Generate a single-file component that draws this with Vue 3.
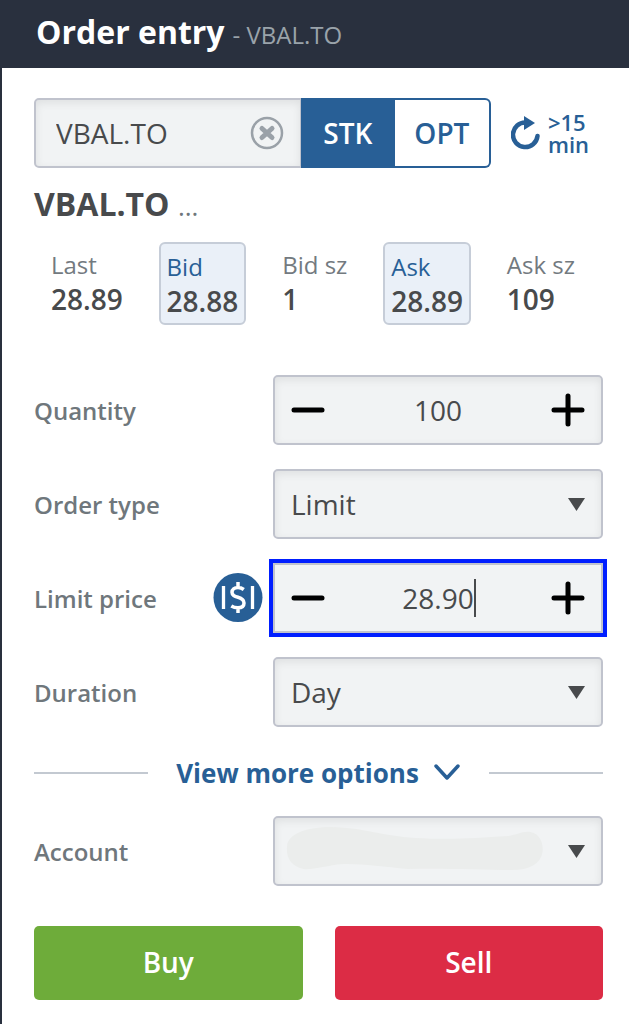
<template>
  <div class="order-entry">
    <header class="header">
      <h1>Order entry</h1>
      <span class="header-symbol">- {{ symbol }}</span>
    </header>

    <form class="form" @submit.prevent>
      <div class="symbol-row">
        <div class="symbol-box">
          <input v-model.trim="symbol" class="symbol-input" type="text" aria-label="Symbol">
          <button type="button" class="icon-btn" aria-label="Clear symbol" @click="symbol = ''">
            <svg width="34" height="34" viewBox="0 0 34 34" fill="none" stroke="#9aa1a8">
              <circle cx="17" cy="17" r="15" stroke-width="2.500" />
              <path d="M12 12.500L22 21.500M22 12.500L12 21.500" stroke-width="5" stroke-linecap="round" />
            </svg>
          </button>
        </div>
        <button
          v-for="kind in kinds"
          :key="kind"
          type="button"
          class="kind"
          :class="{ active: kind === selectedKind }"
          @click="selectedKind = kind"
        >
          {{ kind }}
        </button>
        <button type="button" class="refresh">
          <svg width="30" height="36" viewBox="0 0 30 36">
            <path d="M15 7.500A12.300 12.300 0 1 0 26.500 21" fill="none" stroke="#285f96" stroke-width="4.500" stroke-linecap="round" />
            <path d="M13 1L24 8L13 15z" fill="#285f96" />
          </svg>
          <span>&gt;15<br>min</span>
        </button>
      </div>

      <h2>{{ symbol }} <span class="more">...</span></h2>

      <div class="quotes">
        <component
          :is="quote.price ? 'button' : 'div'"
          v-for="quote in quotes"
          :key="quote.label"
          class="quote"
          :class="{ 'quote-btn': quote.price }"
          :type="quote.price ? 'button' : null"
          @click="quote.price && (price = quote.value)"
        >
          <span class="quote-label">{{ quote.label }}</span>
          <span class="quote-value">{{ quote.value }}</span>
        </component>
      </div>

      <div class="fields">
        <div class="field">
          <label for="quantity">Quantity</label>
          <div class="control">
            <button type="button" class="icon-btn" aria-label="Decrease quantity" @click="quantity--">
              <svg class="step" viewBox="0 0 34 34"><path d="M3 17H31" /></svg>
            </button>
            <input id="quantity" v-model="quantity" type="text">
            <button type="button" class="icon-btn" aria-label="Increase quantity" @click="quantity++">
              <svg class="step" viewBox="0 0 34 34"><path d="M3 17H31M17 3V31" /></svg>
            </button>
          </div>
        </div>

        <div class="field">
          <label for="order-type">Order type</label>
          <div class="control">
            <select id="order-type" v-model="orderType">
              <option>Limit</option>
              <option>Market</option>
            </select>
            <svg class="arrow" viewBox="0 0 17 13"><path d="M0 0H17L8.500 13z" /></svg>
          </div>
        </div>

        <div class="field">
          <label for="price">Limit price</label>
          <button type="button" class="icon-btn price-btn" aria-label="Price helper">
            <svg width="50" height="50" viewBox="0 0 50 50" fill="none" stroke="#fff" stroke-linejoin="round">
              <circle cx="25" cy="24.500" r="24.500" fill="#285f96" stroke="none" />
              <path d="M10.500 13V36M39.500 13V36" stroke-width="3.300" />
              <path d="M30.800 16.500C29 15.200 27 14.500 25 14.500C21.300 14.500 19 16.500 19 19.200C19 22.500 21.500 23.300 25 24.300C28.500 25.300 31 26.800 31 30C31 33 28.700 34.800 25 34.800C22.500 34.800 20.200 34.200 18.300 33M25 9V14.500M25 34.500V40" stroke-width="3.500" />
            </svg>
          </button>
          <div class="control focused">
            <button type="button" class="icon-btn" aria-label="Decrease price" @click="stepPrice(-0.01)">
              <svg class="step" viewBox="0 0 34 34"><path d="M3 17H31" /></svg>
            </button>
            <input id="price" v-model="price" type="text">
            <span class="caret"></span>
            <button type="button" class="icon-btn" aria-label="Increase price" @click="stepPrice(0.01)">
              <svg class="step" viewBox="0 0 34 34"><path d="M3 17H31M17 3V31" /></svg>
            </button>
          </div>
        </div>

        <div class="field">
          <label for="duration">Duration</label>
          <div class="control">
            <select id="duration" v-model="duration">
              <option>Day</option>
              <option>GTC</option>
            </select>
            <svg class="arrow" viewBox="0 0 17 13"><path d="M0 0H17L8.500 13z" /></svg>
          </div>
        </div>
      </div>

      <div class="divider">
        <button type="button" class="more-options">
          View more options
          <svg width="28" height="18" viewBox="0 0 28 18" fill="none" stroke="#285f96" stroke-width="3.500" stroke-linecap="round" stroke-linejoin="round">
            <path d="M3 2L14 14L25 2" />
          </svg>
        </button>
      </div>

      <div class="field">
        <label for="account">Account</label>
        <div class="control">
          <select id="account" v-model="account">
            <option value=""></option>
          </select>
          <svg class="smudge" viewBox="0 0 258 46" preserveAspectRatio="none">
            <path d="M1 20C2 8 20 1 46 1C80 2 96 10 130 12C166 14 190 12 222 10C232 9 236 5 245 6C255 8 258 18 257 26C255 38 244 44 226 44C196 44 160 42 122 43C92 40 64 36 48 39C36 41 24 44 18 43C5 40 0 32 1 20z" />
          </svg>
          <svg class="arrow" viewBox="0 0 17 13"><path d="M0 0H17L8.500 13z" /></svg>
        </div>
      </div>

      <div class="actions">
        <button type="submit" class="btn btn-buy">Buy</button>
        <button type="submit" class="btn btn-sell">Sell</button>
      </div>
    </form>
  </div>
</template>

<script setup>
import { ref } from "vue"

const symbol = ref("VBAL.TO")
const kinds = ["STK", "OPT"]
const selectedKind = ref("STK")
const quantity = ref(100)
const orderType = ref("Limit")
const price = ref("28.90")
const duration = ref("Day")
const account = ref("")

const quotes = [
  { label: "Last", value: "28.89" },
  { label: "Bid", value: "28.88", price: true },
  { label: "Bid sz", value: "1" },
  { label: "Ask", value: "28.89", price: true },
  { label: "Ask sz", value: "109" },
]

const stepPrice = (amount) => {
  price.value = (Number(price.value) + amount).toFixed(2)
}
</script>

<style>
body {
  margin: 0;
  background: #fff;
}
</style>

<style scoped>
.order-entry {
  box-sizing: border-box;
  min-height: 100vh;
  border-left: 2px solid #29303e;
  background: #fff;
  color: #484a4c;
  font-family: "Open Sans", "Noto Sans", sans-serif;
}

.order-entry * {
  box-sizing: border-box;
}

button,
input,
select {
  margin: 0;
  padding: 0;
  border: none;
  background: none;
  color: inherit;
  font-family: inherit;
  outline: none;
}

button {
  cursor: pointer;
}

svg {
  display: block;
  flex-shrink: 0;
}

.header {
  display: flex;
  align-items: baseline;
  gap: 8px;
  height: 68px;
  padding: 10px 34px 0;
  background: #29303e;
}

h1 {
  margin: 0;
  color: #fff;
  font-size: 32px;
  line-height: 44px;
}

.header-symbol {
  color: #9aa3aa;
  font-size: 24px;
}

.form {
  padding: 30px 26px 22px 32px;
}

.symbol-row {
  display: flex;
  height: 70px;
  padding-right: 14px;
}

.symbol-box,
.control {
  display: flex;
  align-items: center;
  border: 2px solid #c0c3cd;
  border-radius: 5px;
  background: #f1f3f4;
  box-shadow: inset 0 3px 8px rgba(0, 0, 0, 0.08);
}

.symbol-box {
  flex: 1;
  min-width: 0;
  padding: 0 16px 0 20px;
  border-right-width: 1px;
  border-radius: 5px 0 0 5px;
}

.symbol-input {
  flex: 1;
  min-width: 0;
  font-size: 28px;
}

.kind {
  width: 94px;
  border: 2px solid #285f96;
  color: #285f96;
  font-size: 28px;
  font-weight: 600;
}

.kind.active {
  background: #285f96;
  color: #fff;
}

.kind + .kind {
  width: 96px;
  border-left: none;
  border-radius: 0 6px 6px 0;
}

.refresh {
  display: flex;
  align-items: center;
  gap: 7px;
  margin-left: 20px;
  color: #285f96;
  font-size: 22px;
  font-weight: 600;
  line-height: 22px;
  text-align: left;
}

h2 {
  margin: 14px 0 16px;
  font-size: 32px;
  line-height: 44px;
}

.more {
  color: #6f777c;
  font-size: 26px;
  font-weight: 400;
  line-height: 1;
}

.quotes {
  display: flex;
  align-items: flex-start;
  justify-content: space-between;
  padding: 0 20px 0 9px;
}

.quote {
  display: flex;
  flex-direction: column;
  padding: 6px 8px;
  text-align: left;
}

.quote-btn {
  border: 2px solid #c6cdd8;
  border-radius: 6px;
  padding: 6px 6px 5px;
  background: #eaf0f8;
}

.quote-label {
  color: #737a7f;
  font-size: 24px;
  line-height: 34px;
}

.quote-btn .quote-label {
  color: #285f96;
}

.quote-value {
  font-size: 28px;
  font-weight: 600;
  line-height: 34px;
}

.fields {
  display: flex;
  flex-direction: column;
  gap: 24px;
  margin-top: 50px;
}

.field {
  display: flex;
  align-items: center;
  height: 70px;
}

.field label {
  flex: 1;
  color: #6f777c;
  font-size: 24px;
  font-weight: 600;
}

.control {
  position: relative;
  width: 58%;
  height: 70px;
  padding: 0 16px;
}

.control input {
  flex: 1;
  min-width: 0;
  font-size: 28px;
  text-align: center;
}

.control select {
  flex: 1;
  align-self: stretch;
  appearance: none;
  font-size: 28px;
}

.control.focused {
  outline: 4px solid #001eff;
  border-radius: 0;
  box-shadow: none;
}

.caret {
  position: absolute;
  left: calc(50% + 36px);
  width: 2px;
  height: 38px;
  background: #484a4c;
}

.price-btn {
  margin-right: 10px;
}

.step {
  width: 34px;
  height: 34px;
  fill: none;
  stroke: #000;
  stroke-width: 5;
  stroke-linecap: round;
}

.arrow {
  width: 17px;
  height: 13px;
  fill: #484a4c;
  pointer-events: none;
}

.smudge {
  position: absolute;
  top: 8px;
  left: 11px;
  width: 79%;
  height: 46px;
  fill: #ebedec;
  pointer-events: none;
}

.divider {
  display: flex;
  align-items: center;
  gap: 28px;
  margin: 24px 0 21px;
}

.divider::before,
.divider::after {
  content: "";
  flex: 1;
  height: 2px;
  background: #c3c9d1;
}

.more-options {
  display: flex;
  align-items: center;
  gap: 14px;
  color: #285f96;
  font-size: 26px;
  font-weight: 700;
  line-height: 44px;
}

.actions {
  display: flex;
  gap: 32px;
  margin-top: 40px;
}

.btn {
  flex: 1;
  height: 74px;
  padding-bottom: 2px;
  border-radius: 5px;
  color: #fff;
  font-size: 28px;
  font-weight: 600;
}

.btn-buy {
  background: #6eac3a;
}

.btn-sell {
  background: #dc2c45;
}
</style>
